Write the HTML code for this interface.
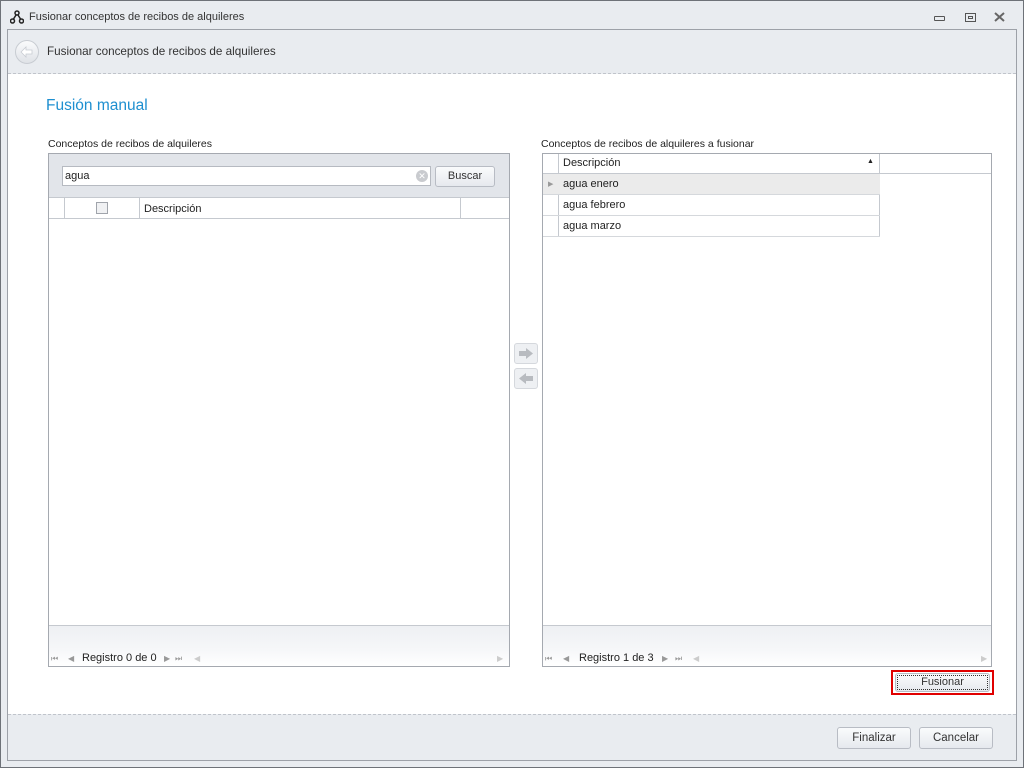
<!DOCTYPE html>
<html><head><meta charset="utf-8"><style>
*{box-sizing:border-box;margin:0;padding:0}
body{width:1024px;height:768px;background:#e9ecf0;font-family:"Liberation Sans",sans-serif;font-size:12px;color:#222;position:relative;overflow:hidden}
.a{position:absolute;white-space:nowrap}
.btn{position:absolute;border:1px solid #b8bcc4;border-radius:3px;background:linear-gradient(#fafbfc,#e6e9ee);text-align:center;color:#333}
.pg{position:absolute;font-size:8px;color:#999}
</style></head><body>
<div class="a" style="left:0;top:0;width:1024px;height:768px;border:1px solid #6e7278"></div>
<svg class="a" style="left:10px;top:10px" width="14" height="14" viewBox="0 0 14 14"><circle cx="7" cy="3" r="2" fill="none" stroke="#222" stroke-width="1.5"/><circle cx="2.5" cy="11" r="2" fill="none" stroke="#222" stroke-width="1.5"/><circle cx="11.5" cy="11" r="2" fill="none" stroke="#222" stroke-width="1.5"/><path d="M6 5L3.5 9M8 5L10.5 9" stroke="#222" stroke-width="1.5"/></svg>
<div class="a" style="left:29px;top:11px;color:#333;font-size:11px">Fusionar conceptos de recibos de alquileres</div>
<div class="a" style="left:934px;top:16px;width:11px;height:5px;border:1px solid #555;border-radius:1px"></div>
<div class="a" style="left:965px;top:13px;width:11px;height:9px;border:1px solid #555"><div style="margin:2px 2px;height:3px;border:1px solid #555"></div></div>
<svg class="a" style="left:994px;top:12px" width="11" height="10" viewBox="0 0 11 10"><path d="M1 1L10 9M10 1L1 9" stroke="#666" stroke-width="2"/></svg>
<div class="a" style="left:7px;top:29px;width:1010px;height:732px;border:1px solid #9da1a8;background:#fff"></div>
<div class="a" style="left:8px;top:30px;width:1008px;height:44px;background:#e9ecf0;border-bottom:1px dashed #c0c4cb"></div>
<div class="a" style="left:15px;top:40px;width:24px;height:24px;border-radius:50%;border:1px solid #c8ccd2;background:linear-gradient(#fafbfc,#dfe2e7)"></div>
<svg class="a" style="left:20px;top:45px" width="14" height="14" viewBox="0 0 14 14"><path d="M1 7L6 2V5H12V9H6V12Z" fill="#fff" stroke="#c8ccd2" stroke-width="0.8"/></svg>
<div class="a" style="left:47px;top:45px;font-size:11.7px;color:#333">Fusionar conceptos de recibos de alquileres</div>
<div class="a" style="left:46px;top:97px;font-size:15.5px;color:#1e8fd0">Fusión manual</div>
<div class="a" style="left:48px;top:138px;font-size:10.5px">Conceptos de recibos de alquileres</div>
<div class="a" style="left:541px;top:138px;font-size:10.5px">Conceptos de recibos de alquileres a fusionar</div>
<!-- left grid -->
<div class="a" style="left:48px;top:153px;width:462px;height:514px;border:1px solid #a5a9b0;background:#fff"></div>
<div class="a" style="left:49px;top:154px;width:460px;height:44px;background:#e2e5ea;border-bottom:1px solid #c5c9cf"></div>
<div class="a" style="left:62px;top:166px;width:369px;height:20px;border:1px solid #b6bac1;background:#fff;padding:3px 2px;font-size:11px">agua</div>
<div class="a" style="left:416px;top:170px;width:12px;height:12px;border-radius:50%;background:#c9cbcf;color:#fff;font-size:9px;line-height:12px;text-align:center">✕</div>
<div class="btn" style="left:435px;top:166px;width:60px;height:21px;line-height:19px;font-size:11px">Buscar</div>
<div class="a" style="left:49px;top:198px;width:460px;height:21px;background:#fff;border-bottom:1px solid #c5c9cf"></div>
<div class="a" style="left:64px;top:198px;width:1px;height:20px;background:#c5c9cf"></div>
<div class="a" style="left:139px;top:198px;width:1px;height:20px;background:#c5c9cf"></div>
<div class="a" style="left:460px;top:198px;width:1px;height:20px;background:#c5c9cf"></div>
<div class="a" style="left:96px;top:202px;width:12px;height:12px;border:1px solid #a0a4ab;background:#f0f1f3"></div>
<div class="a" style="left:144px;top:203px;font-size:11px">Descripción</div>
<div class="a" style="left:49px;top:625px;width:460px;height:41px;border-top:1px solid #c5c9cf;background:linear-gradient(#eef0f3,#f6f7f9 60%,#fff)"></div>
<div class="pg" style="left:51px;top:654px">⏮</div><div class="pg" style="left:68px;top:654px">◀</div>
<div class="a" style="left:82px;top:652px;font-size:11px;color:#222">Registro 0 de 0</div>
<div class="pg" style="left:164px;top:654px">▶</div><div class="pg" style="left:175px;top:654px">⏭</div><div class="pg" style="left:194px;top:654px;color:#ccc">◀</div>
<div class="pg" style="left:497px;top:654px;color:#ccc">▶</div>
<!-- arrows -->
<div class="a" style="left:514px;top:343px;width:24px;height:21px;border:1px solid #d5d8dd;border-radius:3px;background:#eef0f3"></div>
<svg class="a" style="left:518px;top:347px" width="16" height="13" viewBox="0 0 16 13"><path d="M1 4H8V1L15 6.5L8 12V9H1Z" fill="#b8bbc0"/></svg>
<div class="a" style="left:514px;top:368px;width:24px;height:21px;border:1px solid #d5d8dd;border-radius:3px;background:#eef0f3"></div>
<svg class="a" style="left:518px;top:372px" width="16" height="13" viewBox="0 0 16 13"><path d="M15 4H8V1L1 6.5L8 12V9H15Z" fill="#b8bbc0"/></svg>
<!-- right grid -->
<div class="a" style="left:542px;top:153px;width:450px;height:514px;border:1px solid #a5a9b0;background:#fff"></div>
<div class="a" style="left:543px;top:154px;width:448px;height:20px;border-bottom:1px solid #c5c9cf"></div>
<div class="a" style="left:558px;top:154px;width:1px;height:83px;background:#c5c9cf"></div>
<div class="a" style="left:879px;top:154px;width:1px;height:83px;background:#c5c9cf"></div>
<div class="a" style="left:563px;top:157px;font-size:11px">Descripción</div>
<div class="a" style="left:867px;top:158px;font-size:7px">▲</div>
<div class="a" style="left:543px;top:174px;width:337px;height:21px;background:#ebebeb;border-bottom:1px solid #d5d8dc"></div>
<div class="a" style="left:543px;top:195px;width:337px;height:21px;border-bottom:1px solid #d5d8dc"></div>
<div class="a" style="left:543px;top:216px;width:337px;height:21px;border-bottom:1px solid #d5d8dc"></div>
<div class="a" style="left:548px;top:180px;font-size:7px;color:#999">▶</div>
<div class="a" style="left:563px;top:178px;font-size:11px">agua enero</div>
<div class="a" style="left:563px;top:199px;font-size:11px">agua febrero</div>
<div class="a" style="left:563px;top:220px;font-size:11px">agua marzo</div>
<div class="a" style="left:543px;top:625px;width:448px;height:41px;border-top:1px solid #c5c9cf;background:linear-gradient(#eef0f3,#f6f7f9 60%,#fff)"></div>
<div class="pg" style="left:545px;top:654px">⏮</div><div class="pg" style="left:563px;top:654px">◀</div>
<div class="a" style="left:579px;top:652px;font-size:11px;color:#222">Registro 1 de 3</div>
<div class="pg" style="left:662px;top:654px">▶</div><div class="pg" style="left:675px;top:654px">⏭</div><div class="pg" style="left:693px;top:654px;color:#ccc">◀</div>
<div class="pg" style="left:981px;top:654px;color:#ccc">▶</div>
<!-- fusionar -->
<div class="a" style="left:891px;top:670px;width:103px;height:25px;border:2px solid #e00000"></div>
<div class="btn" style="left:895px;top:673px;width:95px;height:19px;line-height:17px;font-size:11px;outline:1px dotted #333;outline-offset:-3px">Fusionar</div>
<!-- footer -->
<div class="a" style="left:8px;top:714px;width:1008px;height:46px;background:#e9ecf0;border-top:1px dashed #c0c4cb"></div>
<div class="btn" style="left:837px;top:727px;width:74px;height:22px;line-height:20px;font-size:11.5px">Finalizar</div>
<div class="btn" style="left:919px;top:727px;width:74px;height:22px;line-height:20px;font-size:11.5px">Cancelar</div>
</body></html>
